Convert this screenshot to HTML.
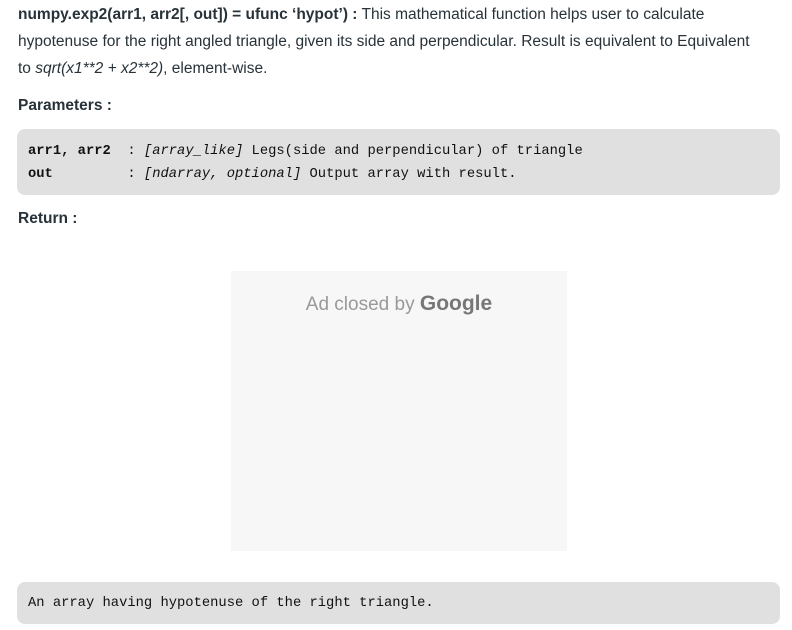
<!DOCTYPE html>
<html><head><style>
body{margin:0;background:#fff;width:792px;height:630px;overflow:hidden;font-family:"Liberation Sans",sans-serif;color:#273239;}
.p{position:absolute;left:18px;font-size:15.5px;line-height:27px;width:775px;white-space:nowrap;}
b{font-weight:bold;}
.code{position:absolute;left:17px;width:763px;background:#e0e0e0;border-radius:8px;font-family:"Liberation Mono",monospace;font-size:13.8px;color:#111;}
.code div{position:absolute;left:11px;white-space:pre;}
.ad{position:absolute;left:231px;top:271px;width:336px;height:280px;background:#f8f7f8;}
</style></head><body>
<div class="p" style="top:1px"><b>numpy.exp2(arr1, arr2[, out]) = ufunc ‘hypot’) :</b> This mathematical function helps user to calculate<br>hypotenuse for the right angled triangle, given its side and perpendicular. Result is equivalent to Equivalent<br>to <i>sqrt(x1**2 + x2**2)</i>, element-wise.</div>
<div class="p" style="top:92px"><b>Parameters :</b></div>
<div class="code" style="top:129px;height:66px">
<div style="top:15px"><b>arr1, arr2</b>  : <i>[array_like]</i> Legs(side and perpendicular) of triangle</div>
<div style="top:38px"><b>out</b>         : <i>[ndarray, optional]</i> Output array with result.</div>
</div>
<div class="p" style="top:205px"><b>Return :</b></div>
<div class="ad"><div style="position:absolute;top:21px;width:100%;text-align:center;font-size:19px;color:#999">Ad closed by <b style="color:#777;font-size:21px">Google</b></div></div>
<div class="code" style="top:582px;height:42px">
<div style="top:14px">An array having hypotenuse of the right triangle.</div>
</div>
</body></html>
